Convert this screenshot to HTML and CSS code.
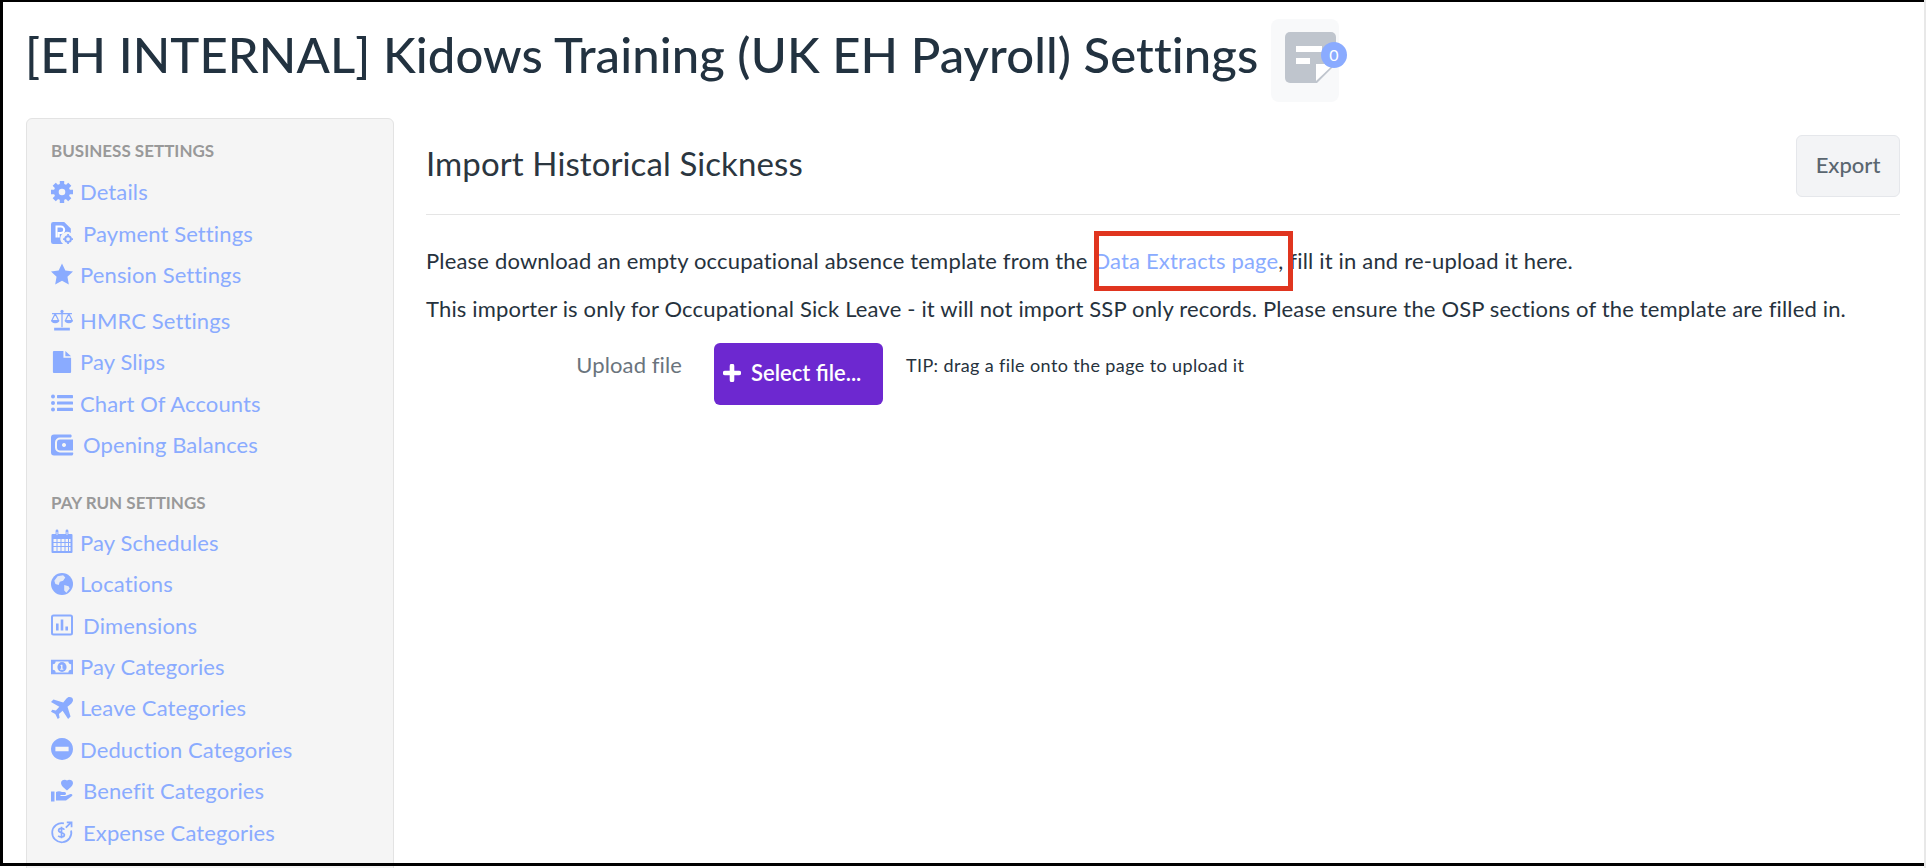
FILE: index.html
```html
<!DOCTYPE html>
<html lang="en">
<head>
<meta charset="utf-8">
<title>Import Historical Sickness</title>
<link rel="stylesheet" href="styles.css">
</head>
<body>
<div class="page">
  <header class="title-row">
    <h1 class="page-title">[EH INTERNAL] Kidows Training (UK EH Payroll) Settings</h1>
    <div class="notes">
      <svg class="notes-doc" viewBox="0 0 51 51"><path d="M5 0h41a5 5 0 0 1 5 5v27L32 51H5a5 5 0 0 1-5-5V5a5 5 0 0 1 5-5z" fill="#bfc5cd"/><path d="M31 49V32h18z" fill="#fff"/><path d="M11 14h26v6H11zM11 26h14v6H11z" fill="#fff"/></svg>
      <span class="notes-badge">0</span>
    </div>
  </header>
  <div class="layout">
    <nav class="sidebar">
      <h2 class="nav-head">BUSINESS SETTINGS</h2>
      <a class="nav-item"><span class="ico"><svg viewBox="0 0 20 20"><circle cx="10" cy="10" r="5.2" fill="none" stroke="currentColor" stroke-width="4.4"/><g fill="currentColor"><path d="M8 0h4v4H8zM8 16h4v4H8zM0 8h4v4H0zM16 8h4v4h-4z"/><path d="M8 0h4v4H8zM8 16h4v4H8zM0 8h4v4H0zM16 8h4v4h-4z" transform="rotate(45 10 10)"/></g></svg></span>Details</a>
      <a class="nav-item wide"><span class="ico"><svg viewBox="0 0 20 20"><path d="M2 0h10l6 6v4a6 6 0 0 0-7 10H2a2 2 0 0 1-2-2V2a2 2 0 0 1 2-2z" fill="currentColor"/><path d="M5 14V4h4a3 3 0 0 1 0 6H7v4" fill="none" stroke="#fff" stroke-width="1.8"/><circle cx="15.5" cy="15.5" r="2.6" fill="none" stroke="currentColor" stroke-width="1.8"/><path d="M15.5 11v1.6M15.5 18.4V20M11 15.5h1.6M18.4 15.5H20" stroke="currentColor" stroke-width="1.6"/></svg></span>Payment Settings</a>
      <a class="nav-item"><span class="ico"><svg viewBox="0 0 21 20"><path d="M10.500 0l3.200 6.600 7.300 1-5.300 5.100 1.300 7.300-6.500-3.500L4 20l1.300-7.300L0 7.600l7.300-1z" fill="currentColor"/></svg></span>Pension Settings</a>
      <a class="nav-item gap-top"><span class="ico"><svg viewBox="0 0 21 20"><g fill="none" stroke="currentColor" stroke-width="1.200"><path d="M1 4h19M10.500 2v15"/><path d="M4 4l-3 6M4 4l3 6M17 4l-3 6M17 4l3 6"/></g><g fill="currentColor"><circle cx="10.500" cy="1.800" r="1.500"/><path d="M0 10h8a4 3 0 0 1-8 0zM13 10h8a4 3 0 0 1-8 0zM3 17.500h15V20H3z"/></g></svg></span>HMRC Settings</a>
      <a class="nav-item"><span class="ico"><svg viewBox="0 0 19 23"><path d="M0 1a1 1 0 0 1 1-1h10v7h8v15a1 1 0 0 1-1 1H1a1 1 0 0 1-1-1zM13 0l6 5.500h-6z" fill="currentColor"/></svg></span>Pay Slips</a>
      <a class="nav-item"><span class="ico"><svg viewBox="0 0 22 17"><g fill="currentColor"><circle cx="2" cy="2" r="2"/><circle cx="2" cy="8.500" r="2"/><circle cx="2" cy="15" r="2"/><rect x="6" y="0.500" width="16" height="3.200" rx=".6"/><rect x="6" y="6.900" width="16" height="3.200" rx=".6"/><rect x="6" y="13.300" width="16" height="3.200" rx=".6"/></g></svg></span>Chart Of Accounts</a>
      <a class="nav-item wide"><span class="ico"><svg viewBox="0 0 22 21"><path d="M3 0h17a2 2 0 0 1 0 3H9a5 5 0 0 0-5 5v5a5 5 0 0 0 5 5h13a2 2 0 0 1-2 3H3a3 3 0 0 1-3-3V3a3 3 0 0 1 3-3z" fill="currentColor"/><path d="M9 5h13v11H9a3 3 0 0 1-3-3V8a3 3 0 0 1 3-3zm4 3.500a2 2 0 1 0 .01 0z" fill="currentColor" fill-rule="evenodd"/></svg></span>Opening Balances</a>
      <h2 class="nav-head later">PAY RUN SETTINGS</h2>
      <a class="nav-item"><span class="ico"><svg viewBox="0 0 21 22"><path d="M1 3h19a1 1 0 0 1 1 1v17a1 1 0 0 1-1 1H1a1 1 0 0 1-1-1V4a1 1 0 0 1 1-1z" fill="currentColor"/><path d="M2 8h3v3H2zM6 8h3v3H6zM10 8h3v3h-3zM14 8h2.500v3H14zM17.500 8H19v3h-1.500zM2 12h3v3H2zM6 12h3v3H6zM10 12h3v3h-3zM14 12h2.500v3H14zM17.500 12H19v3h-1.500zM2 16h3v4H2zM6 16h3v4H6zM10 16h3v4h-3zM14 16h2.500v4H14zM17.500 16H19v4h-1.500z" fill="#f5f5f5"/><path d="M5.500 0v5M15.500 0v5" stroke="currentColor" stroke-width="2.800" stroke-linecap="round"/><path d="M5.500 1v3M15.500 1v3" stroke="#f5f5f5" stroke-width=".8"/></svg></span>Pay Schedules</a>
      <a class="nav-item"><span class="ico"><svg viewBox="0 0 20 20"><circle cx="10" cy="10" r="10" fill="currentColor"/><path d="M6 3l5-1 2 2-2 3-3 1-1 3-3-1-1-3zM12 11l4 1 1 2-3 4-2-2z" fill="#f5f5f5" opacity=".85"/></svg></span>Locations</a>
      <a class="nav-item wide"><span class="ico"><svg viewBox="0 0 22 21"><rect x="1" y="1" width="20" height="19" rx="1.500" fill="none" stroke="currentColor" stroke-width="2"/><path d="M5 9h2.600v7H5zM9.700 5h2.600v11H9.700zM14.400 12H17v4h-2.600z" fill="currentColor"/></svg></span>Dimensions</a>
      <a class="nav-item"><span class="ico"><svg viewBox="0 0 24 16"><path d="M0 0h24v16H0zM5 2a3 3 0 0 1-3 3v6a3 3 0 0 1 3 3h14a3 3 0 0 1 3-3V5a3 3 0 0 1-3-3z" fill="currentColor" fill-rule="evenodd"/><ellipse cx="12" cy="8" rx="5" ry="5.500" fill="currentColor"/><path d="M11 5.500h1.500V10h1v1h-3.500v-1h1V7h-1z" fill="#f5f5f5"/></svg></span>Pay Categories</a>
      <a class="nav-item"><span class="ico"><svg viewBox="0 0 18 18"><path d="M15 0c2 0 3 1 3 2.500 0 1-.5 2-1.500 3L13.500 8 16 16l-2 2-4.500-6.800-3 2.800.5 3-1.500 1-2-4-3.500-2 1-1.500 3 .5 2.800-3L0 4l2-2 8 2.500 2.500-3C13.500.5 14 0 15 0z" fill="currentColor"/></svg></span>Leave Categories</a>
      <a class="nav-item"><span class="ico"><svg viewBox="0 0 20 20"><path d="M10 0a10 10 0 1 0 .01 0zM4 8h12v4H4z" fill="currentColor" fill-rule="evenodd"/></svg></span>Deduction Categories</a>
      <a class="nav-item wide"><span class="ico"><svg viewBox="0 0 22 21"><path d="M0 11h3.500v10H0zM5 11.500c2-1 4-1 6 0h2.500a1.500 1.500 0 0 1 0 3H9.500v1h5l5-2c1.500-.5 2.500 1 1.500 2l-6 4.500H5z" fill="currentColor"/><path d="M16 0c2-1.500 6-.5 6 2.500 0 3-4 5.500-6 7.500-2-2-6-4.500-6-7.500 0-3 4-4 6-2.500z" fill="currentColor"/></svg></span>Benefit Categories</a>
      <a class="nav-item wide"><span class="ico"><svg viewBox="0 0 22 23"><path d="M13 2.500A10 10 0 1 0 20.500 10" fill="none" stroke="currentColor" stroke-width="1.800"/><path d="M15 7l5-5M16 1.500h5v5" fill="none" stroke="currentColor" stroke-width="1.800"/><path d="M13.500 9c-1-1.500-6-2-6 1 0 3 6 1.500 6 4.500 0 3-5 2.500-6.500 1M10.500 6v12" fill="none" stroke="currentColor" stroke-width="1.800"/></svg></span>Expense Categories</a>
    </nav>
    <main class="content">
      <div class="content-head">
        <h2 class="content-title">Import Historical Sickness</h2>
        <button class="export-btn" type="button">Export</button>
      </div>
      <p class="copy first">Please download an empty occupational absence template from the <a class="link">Data Extracts page</a>, fill it in and re-upload it here.</p>
      <p class="copy">This importer is only for Occupational Sick Leave - it will not import SSP only records. Please ensure the OSP sections of the template are filled in.</p>
      <div class="upload-row">
        <label class="upload-label">Upload file</label>
        <button class="select-btn" type="button"><svg class="plus" viewBox="0 0 18 18"><path d="M9 2v14M2 9h14" stroke="#fff" stroke-width="4.600" stroke-linecap="round"/></svg>Select file...</button>
        <span class="tip">TIP: drag a file onto the page to upload it</span>
      </div>
    </main>
  </div>
  <div class="callout"></div>
  <div class="frame"></div>
</div>
</body>
</html>
```
FILE: styles.css
```css
* { box-sizing: border-box; }
html, body { margin: 0; height: 868px; overflow: hidden; background: #fff; }
body { font-family: "Lato", "Liberation Sans", sans-serif; color: #26323d; }

.page {
  position: relative;
  width: 1926px;
  height: 868px;
  padding: 19px 0 0 26px;
  border-right: 2px solid #e8e8e8;
  overflow: hidden;
}

.title-row { display: flex; align-items: flex-start; height: 83px; }
.page-title {
  width: 1246px;
  flex: none;
  margin: 0 0 0 -1px;
  padding-top: 5px;
  font-size: 49px;
  line-height: 60px;
  font-weight: 500;
  letter-spacing: .1px;
  color: #223240;
  white-space: nowrap;
}
.notes {
  position: relative;
  width: 68px;
  height: 83px;
  flex: none;
  background: #f8f9fa;
  border-radius: 8px;
}
.notes-doc { position: absolute; left: 14px; top: 13px; width: 51px; height: 51px; }
.notes-badge {
  position: absolute;
  left: 50px;
  top: 23px;
  width: 26px;
  height: 26px;
  border-radius: 50%;
  background: #8aabff;
  color: #fff;
  font-size: 16px;
  line-height: 25px;
  text-align: center;
}

.layout { display: flex; margin-top: 16px; gap: 32px; }
.sidebar {
  width: 368px;
  height: 760px;
  flex: none;
  padding: 20px 24px;
  background: #f5f5f5;
  border: 1px solid #e3e3e3;
  border-radius: 6px;
  display: flex;
  flex-direction: column;
}
.nav-head {
  margin: 0 0 8px;
  font-size: 17px;
  line-height: 24px;
  font-weight: 700;
  color: #999;
}
.nav-head.later { margin: 25.5px 0 7px; }
.nav-item {
  display: flex;
  align-items: center;
  height: 41.4px;
  flex: none;
  font-size: 22px;
  letter-spacing: .12px;
  color: #8aabff;
  white-space: nowrap;
}
.nav-item.gap-top { margin-top: 4.5px; }
.ico { display: flex; align-items: center; width: 29px; flex: none; }
.wide .ico { width: 32px; }
.ico svg { display: block; width: 22px; height: 22px; overflow: visible; color: #8aabff; }

.content { width: 1474px; flex: none; }
.content-head {
  display: flex;
  justify-content: space-between;
  align-items: center;
  padding: 17px 0;
  border-bottom: 1px solid #e5e5e5;
}
.content-title {
  margin: 0;
  padding-bottom: 5px;
  font-size: 33px;
  line-height: 57px;
  font-weight: 400;
  letter-spacing: .1px;
  color: #2b3640;
}
.export-btn {
  width: 104px;
  height: 62px;
  padding: 0 0 3px;
  background: #f3f4f6;
  border: 1px solid #e5e7eb;
  border-radius: 6px;
  font: 500 22px "Lato", sans-serif;
  color: #5a6670;
}
.copy { margin: 20px 0 0; font-size: 22px; letter-spacing: .165px; line-height: 28px; white-space: nowrap; }
.copy.first { margin-top: 32px; letter-spacing: .18px; }
.link { color: #8aabff; }

.upload-row { display: flex; align-items: flex-start; margin-top: 20px; }
.upload-label {
  width: 256px;
  padding-top: 8px;
  text-align: right;
  font-size: 22px;
  letter-spacing: .1px;
  line-height: 28px;
  color: #6a747d;
}
.select-btn {
  display: flex;
  align-items: center;
  gap: 10px;
  width: 169px;
  height: 62px;
  margin-left: 32px;
  padding: 0 0 3px 9px;
  background: #6d28d0;
  border: 0;
  border-radius: 6px;
  font: 600 22px "Lato", sans-serif;
  color: #fff;
  white-space: nowrap;
}
.plus { width: 18px; height: 18px; flex: none; }
.tip { margin-left: 23px; padding-top: 8px; font-size: 18px; letter-spacing: .38px; line-height: 28px; }

.callout {
  position: absolute;
  left: 1094px;
  top: 231px;
  width: 199px;
  height: 60px;
  border: 5px solid #e0351f;
}
.frame {
  position: absolute;
  left: 0;
  top: 0;
  width: 1932px;
  height: 866px;
  border: solid #000;
  border-width: 2px 3px 3px 3px;
  pointer-events: none;
}
```
